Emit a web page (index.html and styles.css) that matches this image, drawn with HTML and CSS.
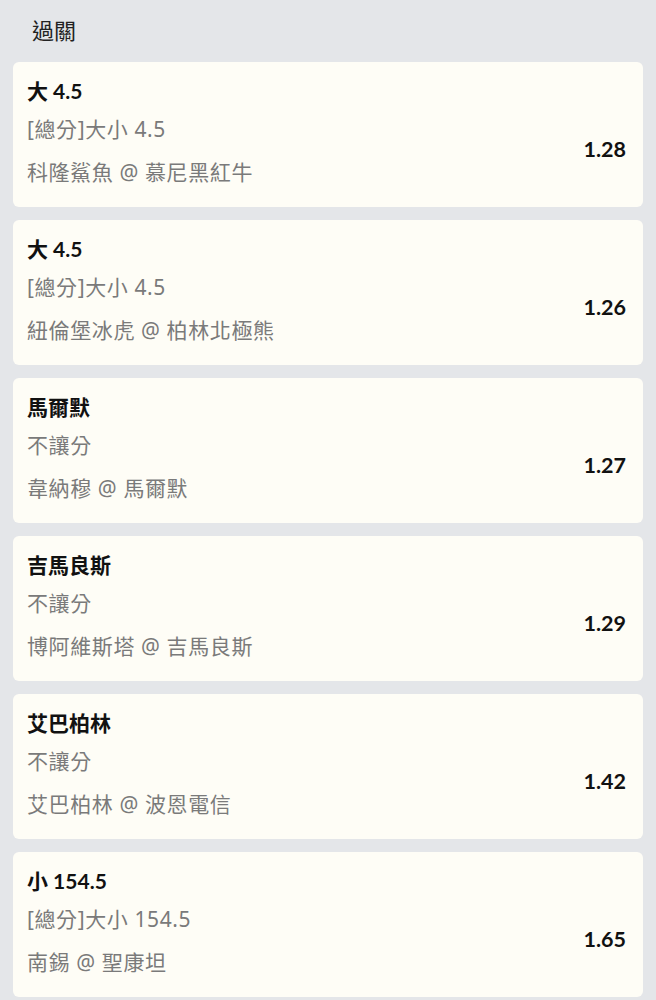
FILE: index.html
```html
<!DOCTYPE html>
<html lang="zh-Hant">
<head>
<meta charset="utf-8">
<link rel="stylesheet" href="styles.css">
</head>
<body>
<div class="page">
  <h1 class="heading">過關</h1>
  <div class="list">
    <div class="card">
      <div class="title">大 4.5</div>
      <div class="body">
        <div class="info">
          <div class="market">[總分]大小 4.5</div>
          <div class="match">科隆鯊魚 @ 慕尼黑紅牛</div>
        </div>
        <div class="odds">1.28</div>
      </div>
    </div>
    <div class="card">
      <div class="title">大 4.5</div>
      <div class="body">
        <div class="info">
          <div class="market">[總分]大小 4.5</div>
          <div class="match">紐倫堡冰虎 @ 柏林北極熊</div>
        </div>
        <div class="odds">1.26</div>
      </div>
    </div>
    <div class="card">
      <div class="title">馬爾默</div>
      <div class="body">
        <div class="info">
          <div class="market">不讓分</div>
          <div class="match">韋納穆 @ 馬爾默</div>
        </div>
        <div class="odds">1.27</div>
      </div>
    </div>
    <div class="card">
      <div class="title">吉馬良斯</div>
      <div class="body">
        <div class="info">
          <div class="market">不讓分</div>
          <div class="match">博阿維斯塔 @ 吉馬良斯</div>
        </div>
        <div class="odds">1.29</div>
      </div>
    </div>
    <div class="card">
      <div class="title">艾巴柏林</div>
      <div class="body">
        <div class="info">
          <div class="market">不讓分</div>
          <div class="match">艾巴柏林 @ 波恩電信</div>
        </div>
        <div class="odds">1.42</div>
      </div>
    </div>
    <div class="card">
      <div class="title">小 154.5</div>
      <div class="body">
        <div class="info">
          <div class="market">[總分]大小 154.5</div>
          <div class="match">南錫 @ 聖康坦</div>
        </div>
        <div class="odds">1.65</div>
      </div>
    </div>
  </div>
</div>
</body>
</html>
```

FILE: styles.css
```css
html, body {
  margin: 0;
  padding: 0;
  background: #e4e6e9;
}
body {
  font-family: Lato, "Noto Sans CJK TC", sans-serif;
  color: #111;
}
.page {
  padding: 13px 13px 0 13px;
}
.heading {
  margin: 0 0 17px 19px;
  font-size: 22px;
  line-height: 32px;
  font-weight: 400;
  color: #222;
  font-family: "Noto Sans CJK TC", sans-serif;
}
.list {
  display: flex;
  flex-direction: column;
  gap: 13px;
}
.card {
  background: #fefdf6;
  border-radius: 6px;
  padding: 14px 17px 19px 14px;
  height: 145px;
  box-sizing: border-box;
}
.title {
  font-size: 21px;
  line-height: 30px;
  font-weight: 700;
  color: #111;
}
.body {
  display: flex;
  align-items: center;
  justify-content: space-between;
  margin-top: 8px;
}
.info {
  display: flex;
  flex-direction: column;
  gap: 13px;
}
.market, .match {
  font-family: "Noto Sans", "Noto Sans CJK TC", sans-serif;
  font-size: 21px;
  letter-spacing: 0.6px;
  line-height: 30px;
  color: #7a7a7a;
}
.odds {
  font-size: 21.5px;
  font-weight: 700;
  color: #111;
  margin-bottom: 4px;
}
```
